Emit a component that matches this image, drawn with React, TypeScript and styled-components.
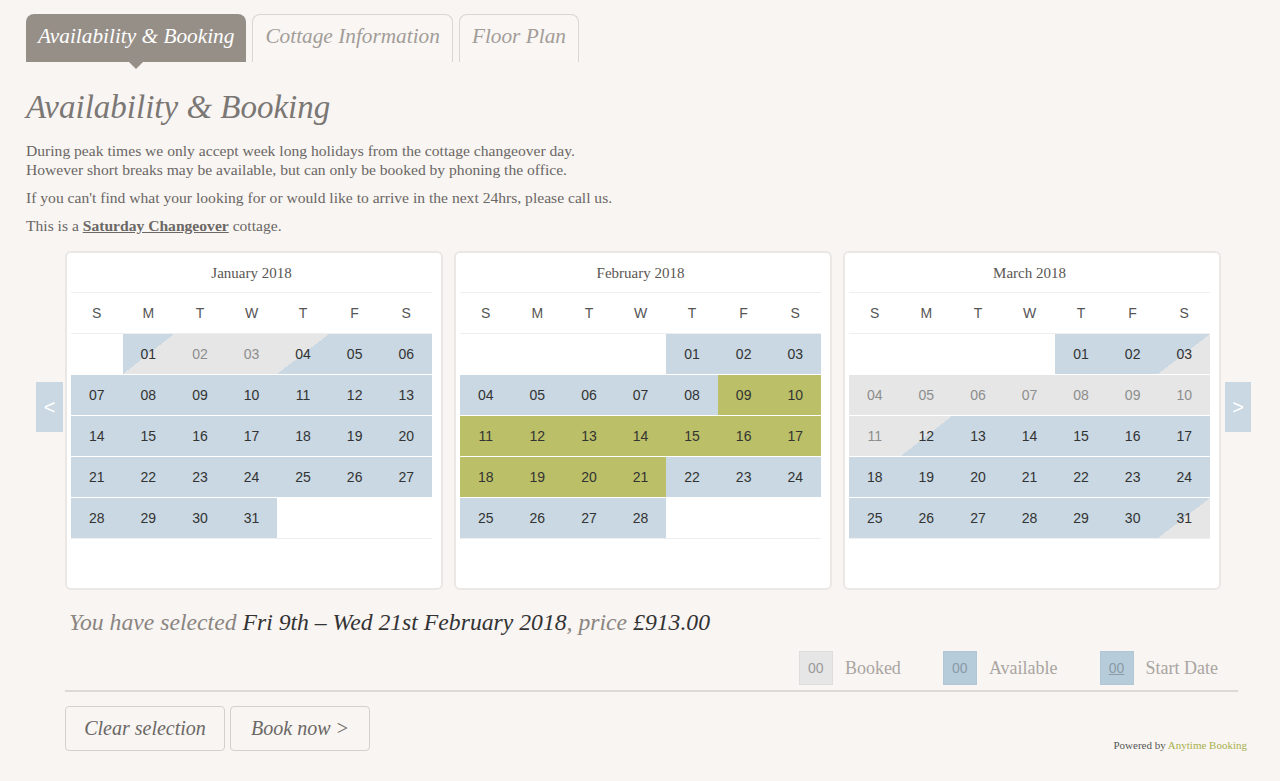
import React from "react";
import styled, { createGlobalStyle, css } from "styled-components";

const GlobalStyle = createGlobalStyle`
  html, body { margin: 0; padding: 0; background: #f8f5f3; }
  body { font-family: "Liberation Serif", "Times New Roman", serif; }
  * { box-sizing: border-box; }
`;

const Page = styled.div`
  padding: 14px 0 0 26px;
  width: 1280px;
  min-height: 781px;
`;

const Tabs = styled.div`
  display: flex;
  gap: 6px;
  height: 48px;
`;

const Tab = styled.div<{ $active?: boolean }>`
  position: relative;
  height: 48px;
  padding: 0 12px 4px;
  display: flex;
  align-items: center;
  border-radius: 8px 8px 0 0;
  font-family: "Liberation Serif", serif;
  font-style: italic;
  font-size: 21.3px;
  ${(p) =>
    p.$active
      ? css`
          background: #968f88;
          color: #ffffff;
          &::after {
            content: "";
            position: absolute;
            left: 50%;
            bottom: -7px;
            margin-left: -7px;
            border-left: 7px solid transparent;
            border-right: 7px solid transparent;
            border-top: 7px solid #968f88;
          }
        `
      : css`
          border: 1px solid #ddd5cf;
          border-bottom: none;
          color: #a39d98;
          background: #f9f6f4;
        `}
`;

const Heading = styled.h1`
  margin: 25px 0 0;
  font-family: "Liberation Serif", serif;
  font-style: italic;
  font-weight: normal;
  font-size: 33px;
  line-height: 40px;
  color: #7b7774;
`;

const Para = styled.p`
  margin: 14px 0 0;
  font-size: 15.6px;
  line-height: 19px;
  color: #6b6764;
  & + & { margin-top: 9px; }
  strong { color: #6b6764; text-decoration: underline; }
`;

const CalendarStrip = styled.div`
  display: flex;
  align-items: flex-start;
  margin: 16px 0 0 10px;
`;

const Arrow = styled.div<{ $right?: boolean }>`
  width: ${(p) => (p.$right ? 26 : 27)}px;
  height: 50px;
  margin-top: 131px;
  margin-left: ${(p) => (p.$right ? 4 : 0)}px;
  margin-right: ${(p) => (p.$right ? 0 : 2)}px;
  background: #c9d8e2;
  color: #ffffff;
  font-family: "Liberation Sans", sans-serif;
  font-size: 20px;
  display: flex;
  align-items: center;
  justify-content: center;
`;

const Cards = styled.div`
  display: flex;
  gap: 11px;
`;

const Card = styled.div`
  width: 378px;
  height: 339px;
  background: #ffffff;
  border: 2px solid #ebe7e4;
  border-radius: 6px;
  padding: 1px 9px 0 4px;
`;

const MonthTitle = styled.div`
  height: 39px;
  display: flex;
  align-items: center;
  justify-content: center;
  font-family: "Liberation Serif", serif;
  font-size: 15px;
  color: #5a5653;
  border-bottom: 1px solid #eeeeee;
`;

const WeekHead = styled.div`
  display: grid;
  grid-template-columns: repeat(7, 1fr);
  height: 41px;
  border-bottom: 1px solid #eeeeee;
`;

const WeekDay = styled.div`
  display: flex;
  align-items: center;
  justify-content: center;
  font-family: "Liberation Sans", sans-serif;
  font-size: 14px;
  color: #555555;
`;

const DayGrid = styled.div`
  display: grid;
  grid-template-columns: repeat(7, 1fr);
  grid-auto-rows: 40px;
  row-gap: 1px;
  background: #ffffff;
  border-bottom: 1px solid #eeeeee;
`;

type State = "empty" | "avail" | "booked" | "sel" | "ab" | "ba";

const AV = "#c9d8e2";
const BK = "#e6e6e6";
const SL = "#bbbf67";

const Day = styled.div<{ $s: State }>`
  display: flex;
  align-items: center;
  justify-content: center;
  font-family: "Liberation Sans", sans-serif;
  font-size: 14px;
  color: ${(p) => (p.$s === "booked" ? "#8d8d8d" : "#333333")};
  background: ${(p) =>
    p.$s === "avail"
      ? AV
      : p.$s === "booked"
      ? BK
      : p.$s === "sel"
      ? SL
      : p.$s === "ab"
      ? `linear-gradient(to bottom right, ${AV} 50%, ${BK} 50%)`
      : p.$s === "ba"
      ? `linear-gradient(to bottom right, ${BK} 50%, ${AV} 50%)`
      : "#ffffff"};
`;

const Footer = styled.div`
  margin-left: 39px;
  width: 1173px;
`;

const Selected = styled.div`
  margin-top: 17px;
  padding-left: 4px;
  font-family: "Liberation Serif", serif;
  font-style: italic;
  font-size: 23.7px;
  line-height: 30px;
  color: #8a8580;
  span { color: #333333; }
`;

const Legend = styled.div`
  margin-top: 14px;
  display: flex;
  justify-content: flex-end;
  padding-right: 20px;
  gap: 42px;
`;

const LegendItem = styled.div`
  display: flex;
  align-items: center;
  gap: 12px;
`;

const Swatch = styled.div<{ $kind: "booked" | "avail" | "start" }>`
  width: 34px;
  height: 34px;
  display: flex;
  align-items: center;
  justify-content: center;
  font-family: "Liberation Sans", sans-serif;
  font-size: 14px;
  background: ${(p) => (p.$kind === "booked" ? "#e6e6e6" : "#b7ccda")};
  border: 1px solid ${(p) => (p.$kind === "booked" ? "#dddddd" : "#b2c7d6")};
  color: ${(p) => (p.$kind === "booked" ? "#9a9a9a" : "#8a9aa6")};
  text-decoration: ${(p) => (p.$kind === "start" ? "underline" : "none")};
`;

const LegendLabel = styled.span`
  font-family: "Liberation Serif", serif;
  font-size: 18px;
  color: #aaa5a1;
`;

const Rule = styled.div`
  margin-top: 5px;
  height: 2px;
  background: #ddd9d6;
`;

const ButtonRow = styled.div`
  margin-top: 14px;
  margin-right: -9px;
  display: flex;
  align-items: flex-end;
  gap: 5px;
`;

const Button = styled.button<{ $w: number }>`
  width: ${(p) => p.$w}px;
  height: 45px;
  background: #f8f5f3;
  border: 1px solid #d5d0cc;
  border-radius: 4px;
  font-family: "Liberation Serif", serif;
  font-style: italic;
  font-size: 20px;
  color: #6b6764;
  padding: 0;
`;

const Powered = styled.div`
  margin-left: auto;
  font-family: "Liberation Serif", serif;
  font-size: 11px;
  color: #555555;
  span { color: #a8b04a; }
`;

type Month = { name: string; offset: number; days: number; state: (d: number) => State };

const months: Month[] = [
  {
    name: "January 2018",
    offset: 1,
    days: 31,
    state: (d) => (d === 1 ? "ab" : d === 2 || d === 3 ? "booked" : d === 4 ? "ba" : "avail"),
  },
  {
    name: "February 2018",
    offset: 4,
    days: 28,
    state: (d) => (d >= 9 && d <= 21 ? "sel" : "avail"),
  },
  {
    name: "March 2018",
    offset: 4,
    days: 31,
    state: (d) =>
      d === 3 || d === 31 ? "ab" : d >= 4 && d <= 11 ? "booked" : d === 12 ? "ba" : "avail",
  },
];

const weekDays = ["S", "M", "T", "W", "T", "F", "S"];

const MonthCard: React.FC<{ m: Month }> = ({ m }) => {
  const cells: React.ReactNode[] = [];
  for (let i = 0; i < m.offset; i++) cells.push(<Day key={`e${i}`} $s="empty" />);
  for (let d = 1; d <= m.days; d++)
    cells.push(
      <Day key={d} $s={m.state(d)}>
        {String(d).padStart(2, "0")}
      </Day>
    );
  while (cells.length % 7 !== 0) cells.push(<Day key={`t${cells.length}`} $s="empty" />);
  return (
    <Card>
      <MonthTitle>{m.name}</MonthTitle>
      <WeekHead>
        {weekDays.map((w, i) => (
          <WeekDay key={i}>{w}</WeekDay>
        ))}
      </WeekHead>
      <DayGrid>{cells}</DayGrid>
    </Card>
  );
};

export default function App() {
  return (
    <Page>
      <GlobalStyle />
      <Tabs>
        <Tab $active>Availability &amp; Booking</Tab>
        <Tab>Cottage Information</Tab>
        <Tab>Floor Plan</Tab>
      </Tabs>
      <Heading>Availability &amp; Booking</Heading>
      <Para>
        During peak times we only accept week long holidays from the cottage changeover day.
        <br />
        However short breaks may be available, but can only be booked by phoning the office.
      </Para>
      <Para>
        If you can't find what your looking for or would like to arrive in the next 24hrs, please call us.
      </Para>
      <Para>
        This is a <strong>Saturday Changeover</strong> cottage.
      </Para>
      <CalendarStrip>
        <Arrow>&lt;</Arrow>
        <Cards>
          {months.map((m) => (
            <MonthCard key={m.name} m={m} />
          ))}
        </Cards>
        <Arrow $right>&gt;</Arrow>
      </CalendarStrip>
      <Footer>
        <Selected>
          You have selected <span>Fri 9th – Wed 21st February 2018</span>, price <span>£913.00</span>
        </Selected>
        <Legend>
          <LegendItem>
            <Swatch $kind="booked">00</Swatch>
            <LegendLabel>Booked</LegendLabel>
          </LegendItem>
          <LegendItem>
            <Swatch $kind="avail">00</Swatch>
            <LegendLabel>Available</LegendLabel>
          </LegendItem>
          <LegendItem>
            <Swatch $kind="start">00</Swatch>
            <LegendLabel>Start Date</LegendLabel>
          </LegendItem>
        </Legend>
        <Rule />
        <ButtonRow>
          <Button $w={160}>Clear selection</Button>
          <Button $w={140}>Book now &gt;</Button>
          <Powered>
            Powered by <span>Anytime Booking</span>
          </Powered>
        </ButtonRow>
      </Footer>
    </Page>
  );
}
